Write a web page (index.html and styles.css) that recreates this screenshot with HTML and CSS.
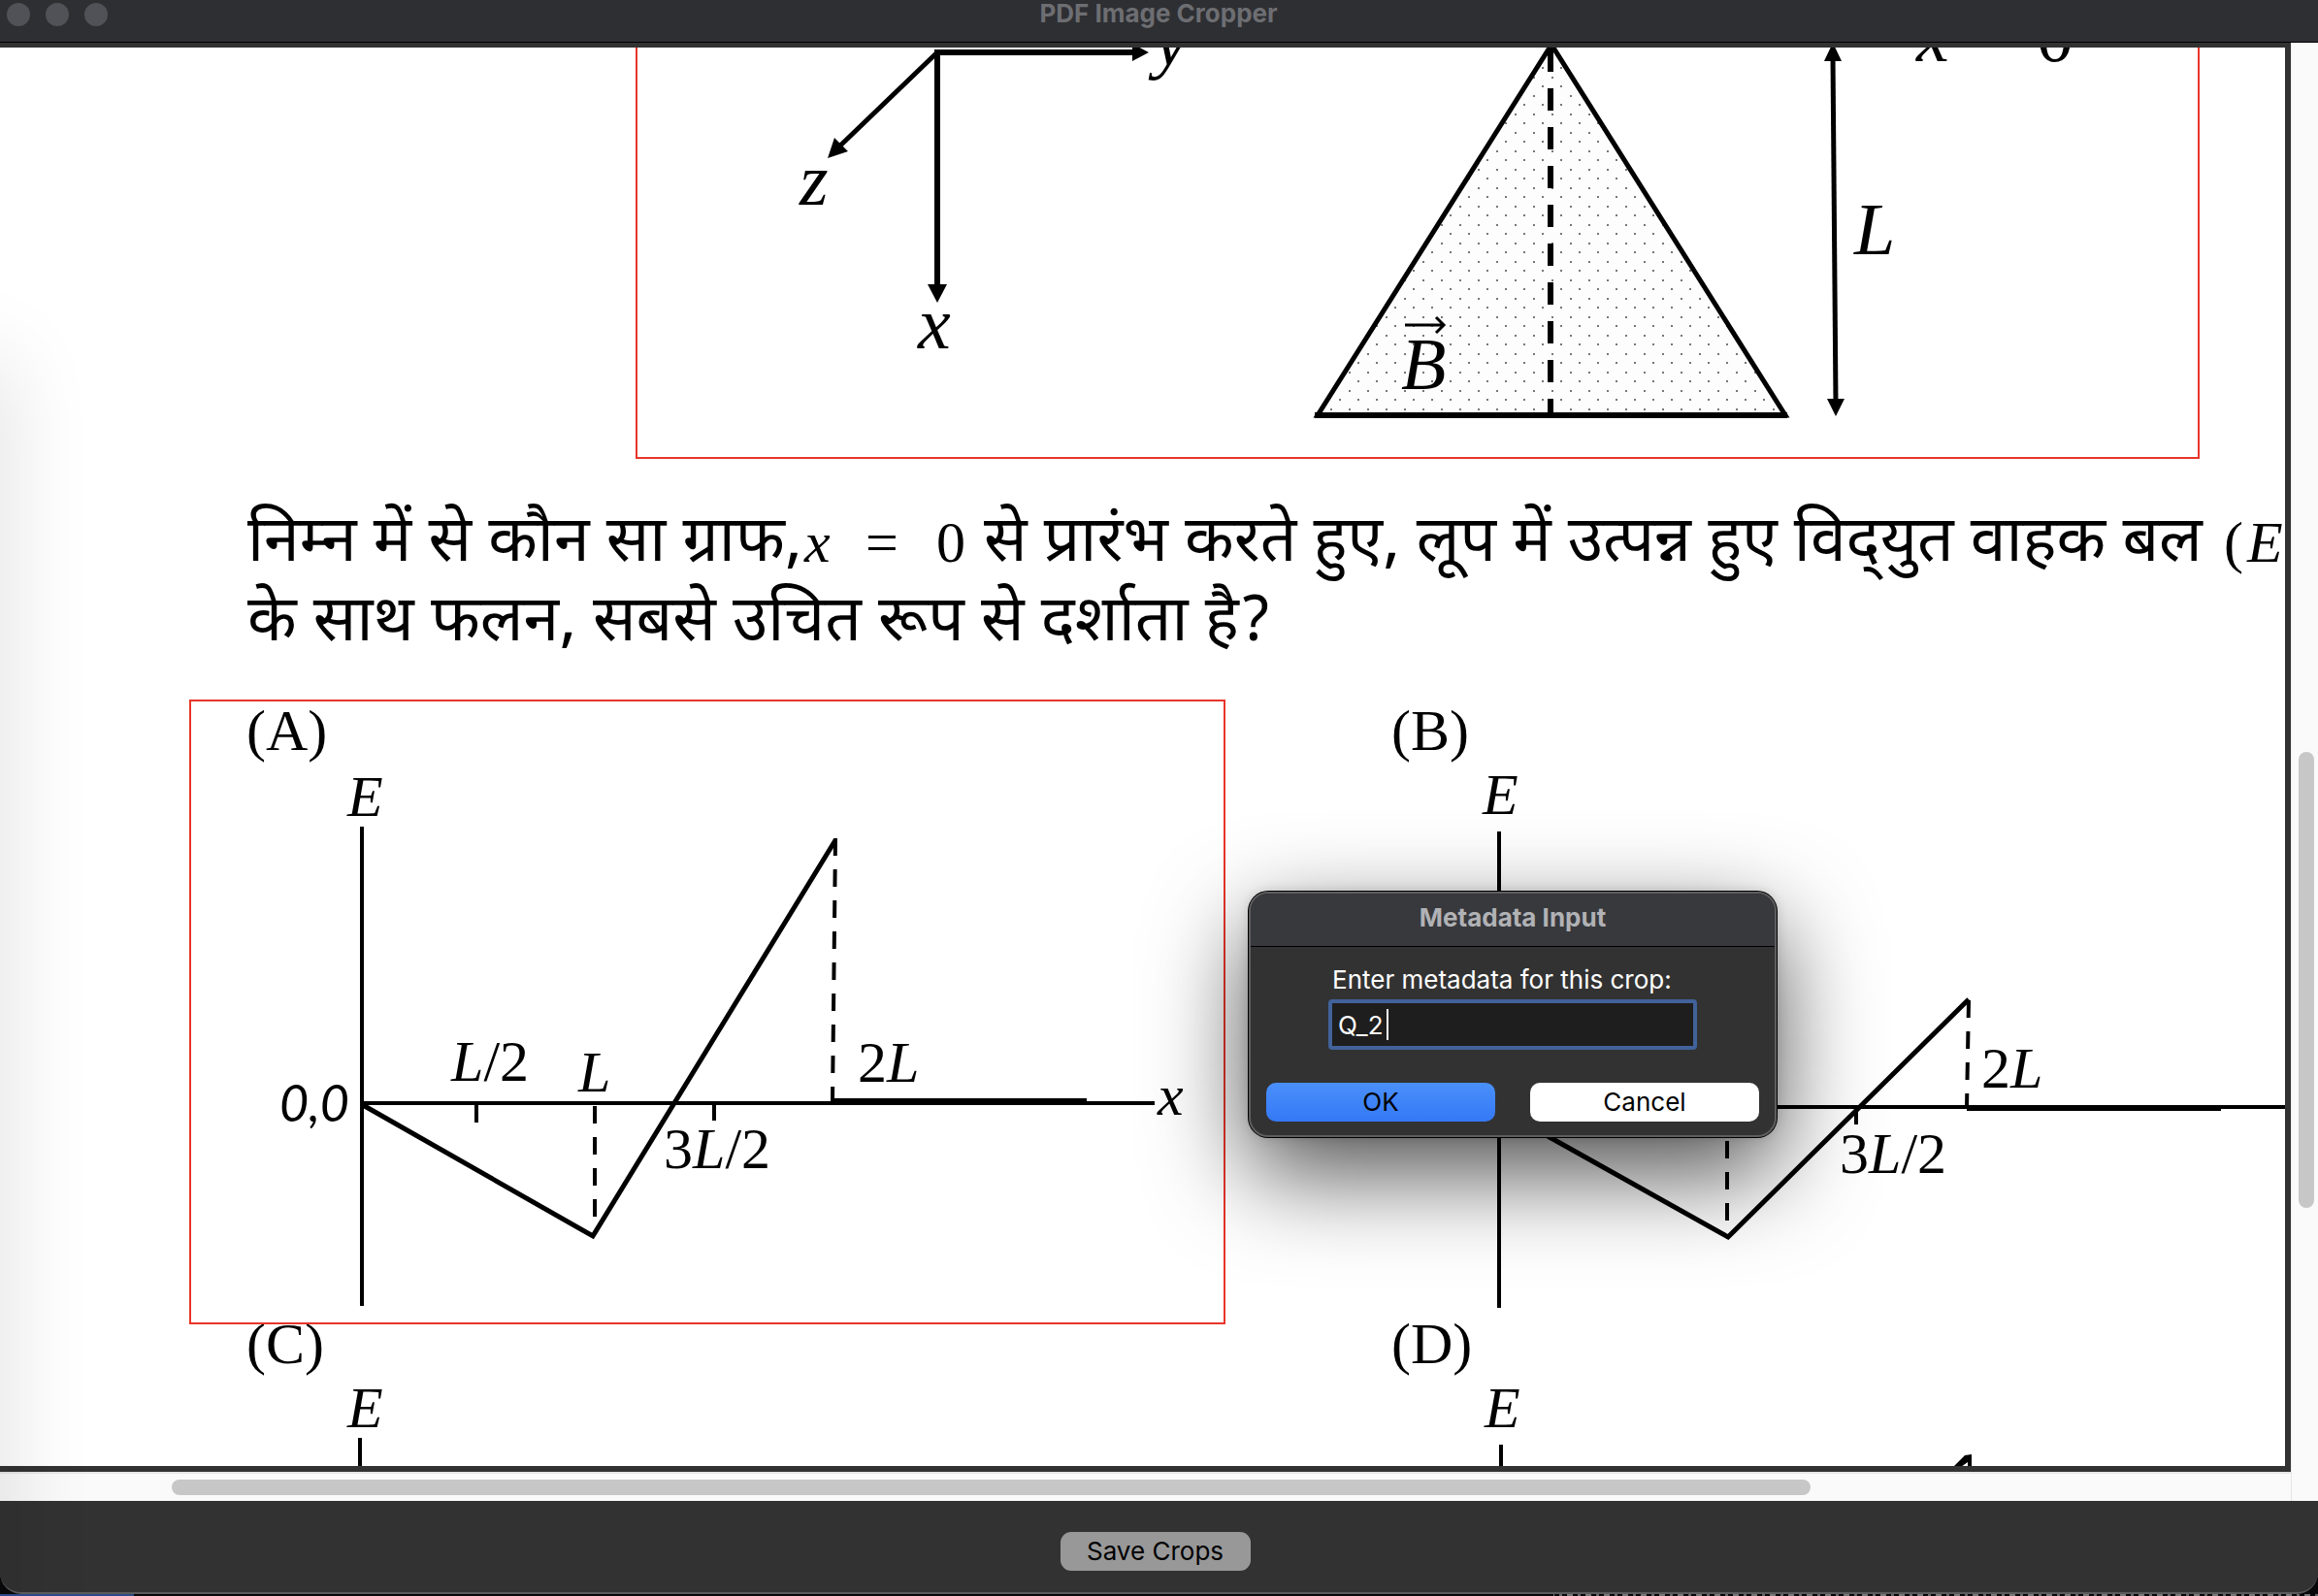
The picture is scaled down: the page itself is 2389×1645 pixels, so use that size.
FILE: index.html
```html
<!DOCTYPE html>
<html lang="hi">
<head>
<meta charset="utf-8">
<title>PDF Image Cropper</title>
<link rel="stylesheet" href="styles.css">
</head>
<body>
<div class="window">
  <header class="titlebar">
    <div class="lights"><span></span><span></span><span></span></div>
    <h1 class="window-title">PDF Image Cropper</h1>
  </header>
  <main class="viewport">
    <div class="canvas">
      <svg class="page" viewBox="0 0 2355 1462" preserveAspectRatio="xMinYMin slice" role="img" aria-label="PDF page">
        <defs>
          <pattern id="dots" width="19" height="19" patternUnits="userSpaceOnUse">
            <rect width="19" height="19" fill="#fdfdfd"/>
            <rect x="3" y="3" width="2" height="2" fill="#777"/>
            <rect x="12" y="12" width="2" height="2" fill="#777"/>
          </pattern>
        </defs>
        <g transform="translate(0 -49)">
          <!-- coordinate axes -->
          <g class="ink">
            <path class="w6" d="M1170 54H966V296"/>
            <path class="w5" d="M966 54L864 152"/>
          </g>
          <path d="M1167 45L1184 54L1167 63ZM956 293H976L966 312ZM853 163L860 142L874 156Z"/>
          <text class="var big" x="1190" y="67">y</text>
          <text class="var big" x="824" y="211">z</text>
          <text class="var big" x="946" y="359">x</text>

          <!-- triangular loop in the field -->
          <path class="ink w5 loop" d="M1599 46L1358 428H1840Z"/>
          <path class="ink w6" d="M1355 428H1842"/>
          <path class="ink w6" stroke-dasharray="23 17" d="M1598 51V428"/>
          <text class="var huge" x="1444" y="401">B</text>
          <path class="ink w3" d="M1448 335H1488M1480 327L1488 335L1480 343"/>
          <path class="ink w5" d="M1889 58L1892 415"/>
          <path d="M1880 63L1889 44L1898 63ZM1883 411H1901L1892 429Z"/>
          <text class="var huge" x="1911" y="262">L</text>
          <text class="var big" x="1975" y="63">x</text>
          <text class="num big" x="2099" y="63">0</text>

          <!-- question -->
          <text class="hindi" x="255" y="578">निम्न में से कौन सा ग्राफ,</text>
          <text class="var" x="829" y="579">x</text>
          <text class="num" x="892" y="579">=</text>
          <text class="num" x="965" y="579">0</text>
          <text class="hindi" x="1014" y="578">से प्रारंभ करते हुए, लूप में उत्पन्न हुए विद्‌युत वाहक बल</text>
          <text class="num" x="2292" y="579">(</text>
          <text class="var" x="2316" y="579">E</text>
          <text class="hindi" x="255" y="660">के साथ फलन, सबसे उचित रूप से दर्शाता है?</text>

          <!-- option A -->
          <text class="num" x="254" y="773">(A)</text>
          <text class="var" x="358" y="841">E</text>
          <g class="ink">
            <path class="w4" d="M373 852V1346M373 1137H1190M491 1137V1157M736 1137V1155"/>
            <path class="w6" d="M858 1135H1120"/>
            <path class="w5" d="M374 1139L611 1274L861 866"/>
            <path class="w4" stroke-dasharray="18 14" d="M861 864L858 1136"/>
            <path class="w4" stroke-dasharray="18 14" d="M613 1140V1258"/>
          </g>
          <text class="origin" x="288" y="1156">0,0</text>
          <text class="var" x="465" y="1114">L<tspan class="num">/2</tspan></text>
          <text class="var" x="596" y="1125">L</text>
          <text class="num" x="884" y="1115">2<tspan class="var">L</tspan></text>
          <text class="num" x="684" y="1204">3<tspan class="var">L</tspan>/2</text>
          <text class="var" x="1193" y="1149">x</text>

          <!-- option B -->
          <text class="num" x="1434" y="773">(B)</text>
          <text class="var" x="1528" y="839">E</text>
          <g class="ink">
            <path class="w4" d="M1545 857V1348M1545 1141H2355M1913 1141V1159"/>
            <path class="w6" d="M2027 1142H2289"/>
            <path class="w5" d="M1545 1143L1781 1275L2029 1030"/>
            <path class="w4" stroke-dasharray="18 14" d="M2029 1031L2027 1142"/>
            <path class="w4" stroke-dasharray="18 14" d="M1780 1144V1258"/>
          </g>
          <text class="num" x="2042" y="1121">2<tspan class="var">L</tspan></text>
          <text class="num" x="1896" y="1209">3<tspan class="var">L</tspan>/2</text>

          <!-- options C and D -->
          <text class="num" x="254" y="1405">(C)</text>
          <text class="var" x="358" y="1471">E</text>
          <text class="num" x="1434" y="1405">(D)</text>
          <text class="var" x="1530" y="1471">E</text>
          <path class="ink w4" d="M371 1482V1512M1547 1489V1512"/>
          <path d="M2013 1512L2025 1500L2032 1499V1512H2028V1507L2021 1512Z"/>

          <!-- crop selections -->
          <path class="crop" d="M656 40V472H2266V40"/>
          <rect class="crop" x="196" y="722" width="1066" height="642"/>
        </g>
      </svg>
    </div>
    <div class="track track-v"><div class="thumb"></div></div>
    <div class="track track-h"><div class="thumb"></div></div>
    <div class="corner"></div>
  </main>
  <footer class="actions"><button class="save" type="button">Save Crops</button></footer>
  <div class="side-shadow"></div>
</div>
<div class="desktop"></div>

<form class="dialog" role="dialog" aria-labelledby="dialog-title">
  <h2 class="dialog-title" id="dialog-title">Metadata Input</h2>
  <div class="dialog-body">
    <label class="label" for="meta">Enter metadata for this crop:</label>
    <div class="field">
      <input class="input" id="meta" type="text" value="Q_2">
      <span class="caret"></span>
    </div>
    <div class="buttons">
      <button class="btn ok" type="button">OK</button>
      <button class="btn cancel" type="button">Cancel</button>
    </div>
  </div>
</form>
</body>
</html>
```
FILE: styles.css
```css
* { box-sizing: border-box; }
body {
  margin: 0;
  height: 100vh;
  display: flex;
  flex-direction: column;
  position: relative;
  overflow: hidden;
  background: #08070a;
  font-family: Inter, "Liberation Sans", sans-serif;
  font-size: 26px;
}
.window {
  flex: 1;
  min-height: 0;
  display: flex;
  flex-direction: column;
  position: relative;
  overflow: hidden;
  background: #323232;
  border-bottom: 2px solid #5a5a5a;
  border-radius: 0 0 22px 22px;
}
.titlebar {
  height: 44px;
  padding: 3px 8px 0 7px;
  display: grid;
  grid-template-columns: 1fr auto 1fr;
  align-items: start;
  background: #2e2f33;
  border-bottom: 1px solid #000;
}
.lights { display: flex; gap: 16px; }
.lights span { width: 24px; height: 24px; border-radius: 50%; background: #515257; }
.window-title { margin: 0; font-size: 26px; line-height: 22px; font-weight: 700; color: #6d6e72; }

.viewport {
  flex: 1;
  min-height: 0;
  display: grid;
  grid-template-columns: 1fr 28px;
  grid-template-rows: 1fr 30px;
}
.canvas {
  min-width: 0;
  min-height: 0;
  overflow: hidden;
  border: solid #323232;
  border-width: 5px 6px 6px 0;
  background: #fff;
}
.page { display: block; width: 100%; height: 100%; }
.track { background: #fafafa; display: flex; }
.track-v { padding: 731px 4px 272px 7px; border-left: 1px solid #ececec; }
.track-h { padding: 6px 495px 6px 177px; border-top: 2px solid #e6e6e6; }
.thumb { flex: 1; border-radius: 8px; background: #c7c7c7; }
.corner { background: #fafafa; border-left: 1px solid #e6e6e6; }

.ink { fill: none; stroke: #000; }
.loop { fill: url(#dots); }
.w3 { stroke-width: 3px; }
.w4 { stroke-width: 4px; }
.w5 { stroke-width: 5px; }
.w6 { stroke-width: 6px; }
.crop { fill: none; stroke: #e8352a; stroke-width: 2px; }
.var, .num { font-family: "Liberation Serif", serif; font-size: 60px; font-style: normal; }
.var { font-style: italic; }
.big { font-size: 76px; }
.huge { font-size: 76px; }
.origin { font-family: Lato, sans-serif; font-style: italic; font-size: 52px; }
.hindi { font-family: "Noto Sans Devanagari", "Noto Sans", sans-serif; font-size: 66px; }

.actions { height: 94px; padding: 32px 8px 0 0; display: flex; justify-content: center; align-items: flex-start; }
.save {
  width: 196px;
  height: 40px;
  padding: 0;
  border: 0;
  border-radius: 11px;
  background: #989898;
  color: #000;
  font: inherit;
  line-height: 38px;
}
.side-shadow {
  position: absolute;
  left: -40px;
  top: 380px;
  bottom: -60px;
  width: 30px;
  box-shadow: 0 0 90px 8px rgba(0, 0, 0, .18);
  pointer-events: none;
}
.desktop {
  height: 2px;
  background:
    linear-gradient(90deg, #2c4a86 138px, transparent 138px),
    linear-gradient(90deg, #08070a 67%, transparent 67%),
    repeating-linear-gradient(90deg, #777 0 6px, #08070a 6px 11px, #666 11px 14px, #08070a 14px 19px);
}

.dialog {
  position: absolute;
  left: 1287px;
  top: 919px;
  width: 544px;
  border: 2px solid #5e5e5f;
  border-radius: 20px;
  background: #323232;
  box-shadow: 0 0 0 1px #000, 0 36px 100px rgba(0, 0, 0, .7), 0 0 12px rgba(0, 0, 0, .15);
}
.dialog-title {
  margin: 0;
  padding: 10px 0 14px;
  border-bottom: 1px solid #000;
  border-radius: 18px 18px 0 0;
  background: #38393d;
  color: #b1b2b5;
  font-size: 26px;
  line-height: 30px;
  font-weight: 700;
  text-align: center;
}
.dialog-body { padding: 18px 16px 14px; display: flex; flex-direction: column; align-items: center; }
.label { width: 380px; padding-left: 4px; color: #fff; line-height: 32px; }
.field { position: relative; margin-top: 4px; width: 380px; }
.input {
  display: block;
  width: 100%;
  height: 52px;
  padding: 0 6px;
  border: 4px solid #41629a;
  border-radius: 4px;
  outline: 0;
  background: #1e1e1e;
  color: #fff;
  font: inherit;
}
.caret { position: absolute; left: 60px; top: 10px; width: 2px; height: 32px; background: #fff; }
.buttons { align-self: stretch; display: flex; gap: 36px; margin-top: 34px; }
.btn { flex: 1; height: 40px; padding: 0; border: 0; border-radius: 10px; color: #000; font: inherit; line-height: 38px; }
.ok { background: linear-gradient(#4a90fa, #3478f6); }
.cancel { background: #fff; }
```
